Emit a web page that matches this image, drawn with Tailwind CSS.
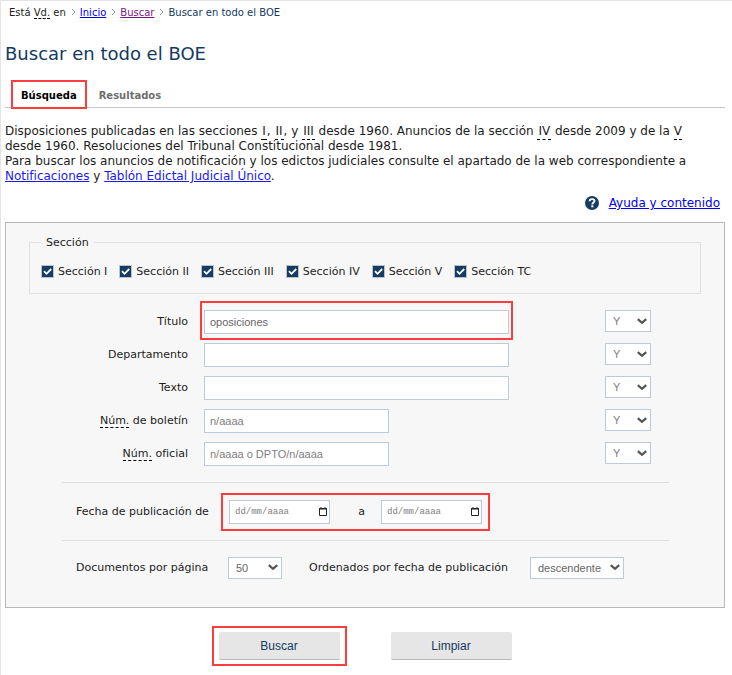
<!DOCTYPE html>
<html lang="es">
<head>
  <meta charset="UTF-8" />
  <meta name="viewport" content="width=device-width, initial-scale=1.0" />
  <title>Buscar en todo el BOE</title>
  <script src="https://cdn.jsdelivr.net/npm/@tailwindcss/browser@4"></script>
</head>
<body class="min-h-screen bg-white border-t border-l border-[#e4e4e4] pl-1 pr-[7px] font-['Verdana','DejaVu_Sans',sans-serif] text-xs text-[#1c1c1c]">
  <!-- Breadcrumb -->
  <nav class="flex items-center gap-[3px] pt-1 pl-1 text-[10px] leading-[15px]">
    <span>Está <abbr class="border-b border-dashed border-black no-underline">Vd.</abbr> en</span>
    <svg class="w-2 h-2 mb-[2px]" viewBox="0 0 8 8" fill="none" stroke="#7d9ab5"><path d="M3 1l3 3-3 3" /></svg>
    <a href="#" class="text-[#0000ee] underline">Inicio</a>
    <svg class="w-2 h-2 mb-[2px]" viewBox="0 0 8 8" fill="none" stroke="#7d9ab5"><path d="M3 1l3 3-3 3" /></svg>
    <a href="#" class="text-[#7b1689] underline">Buscar</a>
    <svg class="w-2 h-2 mb-[2px]" viewBox="0 0 8 8" fill="none" stroke="#7d9ab5"><path d="M3 1l3 3-3 3" /></svg>
    <span class="text-[#123a63]">Buscar en todo el BOE</span>
  </nav>

  <h1 class="mt-[22px] text-lg leading-6 text-[#123a63]">Buscar en todo el BOE</h1>

  <!-- Tabs -->
  <div class="flex mt-[14px] pl-[6px] h-7 border-b border-[#c8c8c8] text-[10px] leading-[15px] font-bold">
    <a href="#" class="h-[29px] px-2 pt-[6px] border-2 border-[#fc3d3d] bg-white text-black">Búsqueda</a>
    <a href="#" class="px-3 pt-2 text-[#6e6e6e]">Resultados</a>
  </div>

  <!-- Intro -->
  <div class="mt-4 pr-5 leading-[15px]">
    <p>Disposiciones publicadas en las secciones <abbr class="px-px pb-px border-b border-dashed border-black no-underline">I</abbr>, <abbr class="px-px pb-px border-b border-dashed border-black no-underline">II</abbr>, y <abbr class="px-px pb-px border-b border-dashed border-black no-underline">III</abbr> desde 1960. Anuncios de la sección <abbr class="px-px pb-px border-b border-dashed border-black no-underline">IV</abbr> desde 2009 y de la <abbr class="pb-px border-b border-dashed border-black no-underline">V</abbr> desde 1960. Resoluciones del Tribunal Constitucional desde 1981.</p>
    <p>Para buscar los anuncios de notificación y los edictos judiciales consulte el apartado de la web correspondiente a <a href="#" class="text-[#1a1aee] underline">Notificaciones</a> y <a href="#" class="text-[#1a1aee] underline">Tablón Edictal Judicial Único</a>.</p>
  </div>

  <div class="flex justify-end items-center gap-[10px] mt-3 pr-[5px] leading-[15px]">
    <svg class="w-[14px] h-[14px] mb-px" viewBox="0 0 14 14" fill="none">
      <circle cx="7" cy="7" r="7" fill="#163c63" />
      <path d="M4.600 5.300C4.600 3.800 5.700 3.100 7.100 3.100S9.500 3.900 9.500 5.100C9.500 6.600 7.300 6.600 7.300 8.400" stroke="#fff" stroke-width="1.900" />
      <path d="M6.300 9.300h2v2h-2z" fill="#fff" />
    </svg>
    <a href="#" class="text-[#0000ee] underline">Ayuda y contenido</a>
  </div>

  <form>
    <div class="mt-[11px] px-[23px] pt-3 pb-7 border border-[#b8b8b8] bg-[#f7f7f7] text-[11px]">
      <fieldset class="border border-[#e0e0e0] px-[11px] pb-[14px]">
        <legend class="px-[5px] leading-[15px]">Sección</legend>
        <div class="flex flex-wrap gap-3 pt-[14px] leading-[15px]">
          <label class="relative flex items-center gap-1"><input type="checkbox" checked class="appearance-none size-[13px] border border-[#b9c3ce] bg-[#163c63]" /><svg class="absolute left-0 size-[13px] pointer-events-none" viewBox="0 0 13 13" fill="none" stroke="#fff" stroke-width="1.8"><path d="M3 6.2l2.5 2.6L10.2 4" /></svg>Sección I</label>
          <label class="relative flex items-center gap-1"><input type="checkbox" checked class="appearance-none size-[13px] border border-[#b9c3ce] bg-[#163c63]" /><svg class="absolute left-0 size-[13px] pointer-events-none" viewBox="0 0 13 13" fill="none" stroke="#fff" stroke-width="1.8"><path d="M3 6.2l2.5 2.6L10.2 4" /></svg>Sección II</label>
          <label class="relative flex items-center gap-1"><input type="checkbox" checked class="appearance-none size-[13px] border border-[#b9c3ce] bg-[#163c63]" /><svg class="absolute left-0 size-[13px] pointer-events-none" viewBox="0 0 13 13" fill="none" stroke="#fff" stroke-width="1.8"><path d="M3 6.2l2.5 2.6L10.2 4" /></svg>Sección III</label>
          <label class="relative flex items-center gap-1"><input type="checkbox" checked class="appearance-none size-[13px] border border-[#b9c3ce] bg-[#163c63]" /><svg class="absolute left-0 size-[13px] pointer-events-none" viewBox="0 0 13 13" fill="none" stroke="#fff" stroke-width="1.8"><path d="M3 6.2l2.5 2.6L10.2 4" /></svg>Sección IV</label>
          <label class="relative flex items-center gap-1"><input type="checkbox" checked class="appearance-none size-[13px] border border-[#b9c3ce] bg-[#163c63]" /><svg class="absolute left-0 size-[13px] pointer-events-none" viewBox="0 0 13 13" fill="none" stroke="#fff" stroke-width="1.8"><path d="M3 6.2l2.5 2.6L10.2 4" /></svg>Sección V</label>
          <label class="relative flex items-center gap-1"><input type="checkbox" checked class="appearance-none size-[13px] border border-[#b9c3ce] bg-[#163c63]" /><svg class="absolute left-0 size-[13px] pointer-events-none" viewBox="0 0 13 13" fill="none" stroke="#fff" stroke-width="1.8"><path d="M3 6.2l2.5 2.6L10.2 4" /></svg>Sección TC</label>
        </div>
      </fieldset>

      <div class="grid grid-cols-[159px_1fr_46px] gap-x-4 gap-y-[9px] items-center mt-4 pr-[50px]">
        <label for="titulo" class="pt-px text-right">Título</label>
        <div class="relative max-w-[305px]">
          <input id="titulo" type="text" value="oposiciones" class="block w-full h-6 px-[5px] border border-[#bccbdb] bg-white font-['Liberation_Sans',sans-serif] text-[#666]" />
          <div class="absolute -inset-x-1 -top-[9px] -bottom-[6px] border-2 border-[#fc3d3d] pointer-events-none"></div>
        </div>
        <div class="relative">
          <select aria-label="Operador título" class="block appearance-none w-full h-[22px] mb-[2px] pl-[7px] border border-[#bccbdb] bg-white font-['Liberation_Sans',sans-serif] text-[#808080]"><option>Y</option><option>O</option><option>NO</option></select>
          <svg class="absolute right-1 top-2 w-[10px] h-[7px] pointer-events-none" viewBox="0 0 10 7" fill="none" stroke="#555" stroke-width="2.2"><path d="M.8 1.200L5 4.900l4.200-3.700" /></svg>
        </div>

        <label for="departamento" class="pt-px text-right">Departamento</label>
        <input id="departamento" type="text" class="block w-full max-w-[305px] h-6 px-[5px] border border-[#bccbdb] bg-white font-['Liberation_Sans',sans-serif] text-[#666]" />
        <div class="relative">
          <select aria-label="Operador departamento" class="block appearance-none w-full h-[22px] mb-[2px] pl-[7px] border border-[#bccbdb] bg-white font-['Liberation_Sans',sans-serif] text-[#808080]"><option>Y</option><option>O</option><option>NO</option></select>
          <svg class="absolute right-1 top-2 w-[10px] h-[7px] pointer-events-none" viewBox="0 0 10 7" fill="none" stroke="#555" stroke-width="2.2"><path d="M.8 1.200L5 4.900l4.200-3.700" /></svg>
        </div>

        <label for="texto" class="pt-px text-right">Texto</label>
        <input id="texto" type="text" class="block w-full max-w-[305px] h-6 px-[5px] border border-[#bccbdb] bg-white font-['Liberation_Sans',sans-serif] text-[#666]" />
        <div class="relative">
          <select aria-label="Operador texto" class="block appearance-none w-full h-[22px] mb-[2px] pl-[7px] border border-[#bccbdb] bg-white font-['Liberation_Sans',sans-serif] text-[#808080]"><option>Y</option><option>O</option><option>NO</option></select>
          <svg class="absolute right-1 top-2 w-[10px] h-[7px] pointer-events-none" viewBox="0 0 10 7" fill="none" stroke="#555" stroke-width="2.2"><path d="M.8 1.200L5 4.900l4.200-3.700" /></svg>
        </div>

        <label for="boletin" class="pt-px text-right"><abbr class="border-b border-dashed border-black no-underline">Núm.</abbr> de boletín</label>
        <input id="boletin" type="text" placeholder="n/aaaa" class="block w-full max-w-[185px] h-6 px-[5px] border border-[#bccbdb] bg-white font-['Liberation_Sans',sans-serif] placeholder:text-[#808080]" />
        <div class="relative">
          <select aria-label="Operador boletín" class="block appearance-none w-full h-[22px] mb-[2px] pl-[7px] border border-[#bccbdb] bg-white font-['Liberation_Sans',sans-serif] text-[#808080]"><option>Y</option><option>O</option><option>NO</option></select>
          <svg class="absolute right-1 top-2 w-[10px] h-[7px] pointer-events-none" viewBox="0 0 10 7" fill="none" stroke="#555" stroke-width="2.2"><path d="M.8 1.200L5 4.900l4.200-3.700" /></svg>
        </div>

        <label for="oficial" class="pt-px text-right"><abbr class="border-b border-dashed border-black no-underline">Núm.</abbr> oficial</label>
        <input id="oficial" type="text" placeholder="n/aaaa o DPTO/n/aaaa" class="block w-full max-w-[185px] h-6 px-[5px] border border-[#bccbdb] bg-white font-['Liberation_Sans',sans-serif] placeholder:text-[#808080]" />
        <div class="relative">
          <select aria-label="Operador oficial" class="block appearance-none w-full h-[22px] mb-[2px] pl-[7px] border border-[#bccbdb] bg-white font-['Liberation_Sans',sans-serif] text-[#808080]"><option>Y</option><option>O</option><option>NO</option></select>
          <svg class="absolute right-1 top-2 w-[10px] h-[7px] pointer-events-none" viewBox="0 0 10 7" fill="none" stroke="#555" stroke-width="2.2"><path d="M.8 1.200L5 4.900l4.200-3.700" /></svg>
        </div>
      </div>

      <!-- Dates -->
      <div class="flex items-center h-[59px] mt-4 ml-[33px] mr-8 pl-[14px] border-y border-[#dedede]">
        <label for="desde" class="w-[137px] pt-px whitespace-nowrap">Fecha de publicación de</label>
        <div class="flex items-center ml-2 px-[6px] h-[38px] border-2 border-[#fc3d3d]">
          <div class="relative">
            <input id="desde" type="text" placeholder="dd/mm/aaaa" class="block w-[101px] h-6 pt-px px-[5px] border border-[#bccbdb] bg-white font-['Liberation_Mono',monospace] text-[9px] placeholder:text-[#808080]" />
            <svg class="absolute right-[3px] top-[7px] w-2 h-[9px] pointer-events-none" viewBox="0 0 8 9" fill="none" stroke="#222"><path d="M.5 1.500h7v7h-7zM0 2h8M2 0v1M6 0v1" /></svg>
          </div>
          <label for="hasta" class="w-[51px] pt-px pl-3 text-center">a</label>
          <div class="relative">
            <input id="hasta" type="text" placeholder="dd/mm/aaaa" class="block w-[101px] h-6 pt-px px-[5px] border border-[#bccbdb] bg-white font-['Liberation_Mono',monospace] text-[9px] placeholder:text-[#808080]" />
            <svg class="absolute right-[3px] top-[7px] w-2 h-[9px] pointer-events-none" viewBox="0 0 8 9" fill="none" stroke="#222"><path d="M.5 1.500h7v7h-7zM0 2h8M2 0v1M6 0v1" /></svg>
          </div>
        </div>
      </div>

      <!-- Page size and order -->
      <div class="flex items-center mt-4 pl-[47px]">
        <label for="porpagina" class="w-[137px] pt-px whitespace-nowrap">Documentos por página</label>
        <div class="relative ml-[15px]">
          <select id="porpagina" class="block appearance-none w-[54px] h-[22px] pl-[7px] border border-[#bccbdb] bg-white font-['Liberation_Sans',sans-serif] text-[#666]"><option>50</option><option>100</option></select>
          <svg class="absolute right-1 top-[7px] w-[10px] h-[7px] pointer-events-none" viewBox="0 0 10 7" fill="none" stroke="#555" stroke-width="2.2"><path d="M.8 1.200L5 4.900l4.200-3.700" /></svg>
        </div>
        <label for="orden" class="w-[205px] pt-px ml-[27px] whitespace-nowrap">Ordenados por fecha de publicación</label>
        <div class="relative ml-4">
          <select id="orden" class="block appearance-none w-[94px] h-[22px] pl-[7px] border border-[#bccbdb] bg-white font-['Liberation_Sans',sans-serif] text-[#666]"><option>descendente</option><option>ascendente</option></select>
          <svg class="absolute right-1 top-[7px] w-[10px] h-[7px] pointer-events-none" viewBox="0 0 10 7" fill="none" stroke="#555" stroke-width="2.2"><path d="M.8 1.200L5 4.900l4.200-3.700" /></svg>
        </div>
      </div>
    </div>

    <div class="flex justify-center gap-[51px] mt-6 font-['Liberation_Sans',sans-serif] text-xs text-[#123a63]">
      <div class="relative">
        <button type="submit" class="block w-[121px] h-7 rounded-xs bg-[#e6e6e6] border-b border-[#b8b8b8]">Buscar</button>
        <div class="absolute -inset-x-[7px] -top-[6px] -bottom-[6px] border-2 border-[#fc3d3d] pointer-events-none"></div>
      </div>
      <button type="reset" class="w-[121px] h-7 rounded-xs bg-[#e6e6e6] border-b border-[#b8b8b8]">Limpiar</button>
    </div>
  </form>
</body>
</html>
